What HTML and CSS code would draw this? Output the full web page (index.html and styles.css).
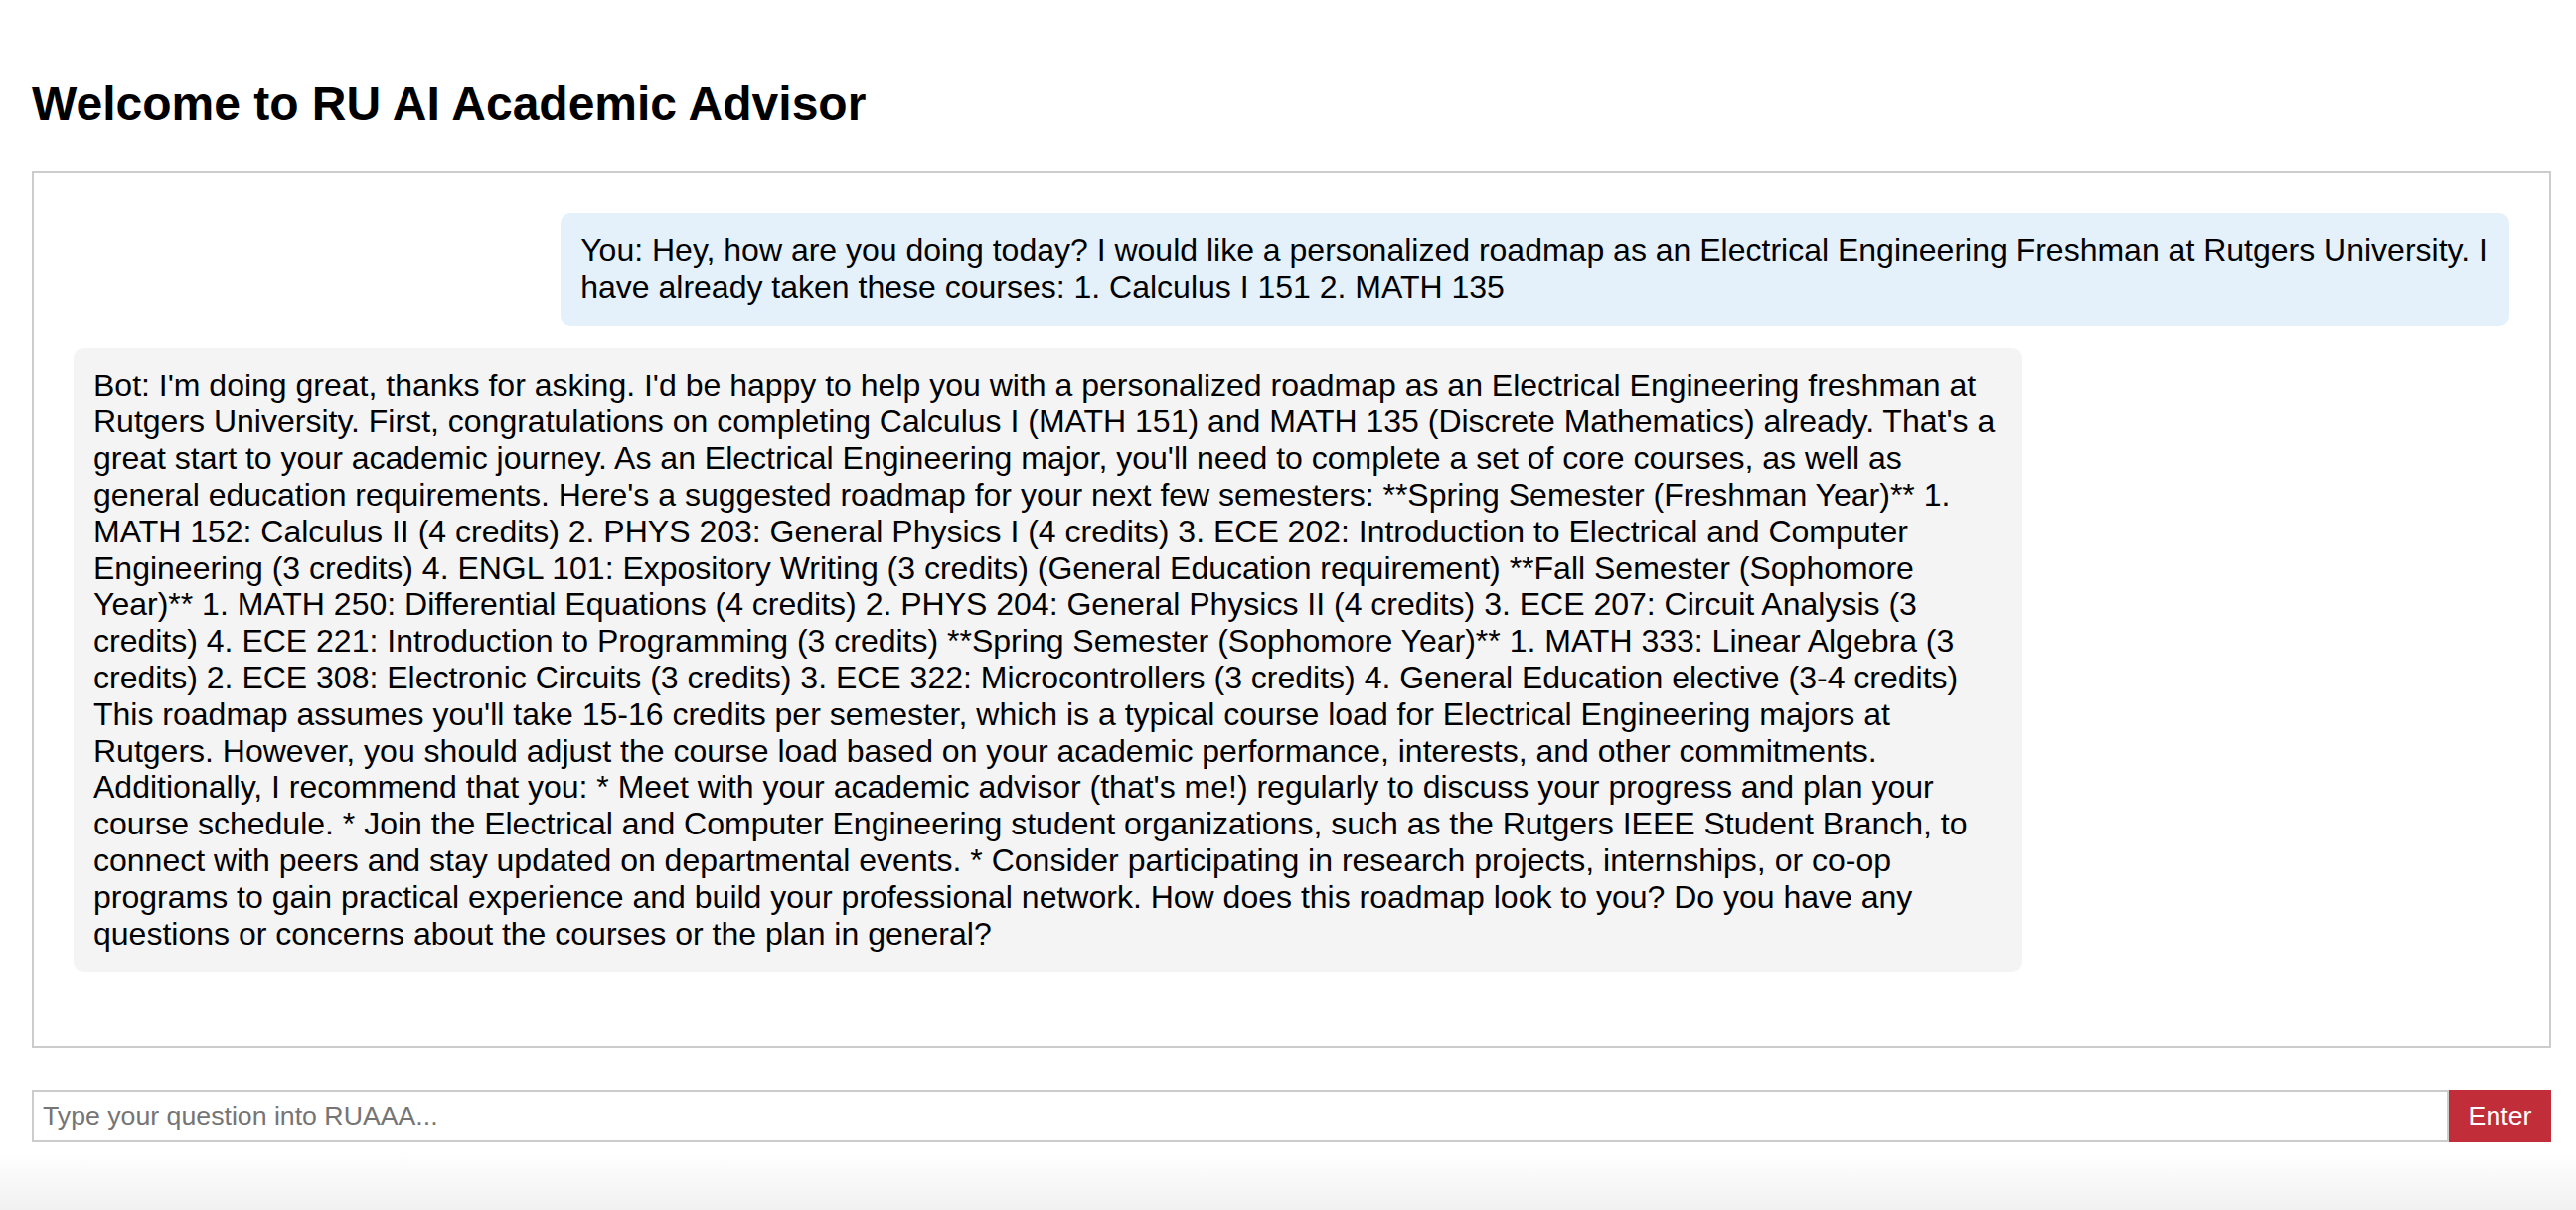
FILE: index.html
```html
<!DOCTYPE html>
<html lang="en">
<head>
<meta charset="utf-8">
<title>RU AI Academic Advisor</title>
<link rel="stylesheet" href="styles.css">
</head>
<body>
<div class="page">
  <h1 class="title">Welcome to RU AI Academic Advisor</h1>
  <div class="chat">
    <div class="msg msg-user">You: Hey, how are you doing today? I would like a personalized roadmap as an Electrical Engineering Freshman at Rutgers University. I have already taken these courses: 1. Calculus I 151 2. MATH 135</div>
    <div class="msg msg-bot">Bot: I'm doing great, thanks for asking. I'd be happy to help you with a personalized roadmap as an Electrical Engineering freshman at Rutgers University. First, congratulations on completing Calculus I (MATH 151) and MATH 135 (Discrete Mathematics) already. That's a great start to your academic journey. As an Electrical Engineering major, you'll need to complete a set of core courses, as well as general education requirements. Here's a suggested roadmap for your next few semesters: **Spring Semester (Freshman Year)** 1. MATH 152: Calculus II (4 credits) 2. PHYS 203: General Physics I (4 credits) 3. ECE 202: Introduction to Electrical and Computer Engineering (3 credits) 4. ENGL 101: Expository Writing (3 credits) (General Education requirement) **Fall Semester (Sophomore Year)** 1. MATH 250: Differential Equations (4 credits) 2. PHYS 204: General Physics II (4 credits) 3. ECE 207: Circuit Analysis (3 credits) 4. ECE 221: Introduction to Programming (3 credits) **Spring Semester (Sophomore Year)** 1. MATH 333: Linear Algebra (3 credits) 2. ECE 308: Electronic Circuits (3 credits) 3. ECE 322: Microcontrollers (3 credits) 4. General Education elective (3-4 credits) This roadmap assumes you'll take 15-16 credits per semester, which is a typical course load for Electrical Engineering majors at Rutgers. However, you should adjust the course load based on your academic performance, interests, and other commitments. Additionally, I recommend that you: * Meet with your academic advisor (that's me!) regularly to discuss your progress and plan your course schedule. * Join the Electrical and Computer Engineering student organizations, such as the Rutgers IEEE Student Branch, to connect with peers and stay updated on departmental events. * Consider participating in research projects, internships, or co-op programs to gain practical experience and build your professional network. How does this roadmap look to you? Do you have any questions or concerns about the courses or the plan in general?</div>
  </div>
  <form class="ask" onsubmit="return false;">
    <input class="ask-input" type="text" placeholder="Type your question into RUAAA...">
    <button class="ask-btn" type="submit">Enter</button>
  </form>
</div>
</body>
</html>
```

FILE: styles.css
```css
html, body {
  margin: 0;
  padding: 0;
}

body {
  min-height: 1218px;
  background: linear-gradient(to bottom, #ffffff 0, #ffffff 1160px, #f1f1f1 1218px);
  font-family: "Liberation Sans", Arial, Helvetica, sans-serif;
  color: #000;
}

.page {
  padding: 0 25px 0 32px;
}

.title {
  margin: 0;
  padding: 77px 0 40px;
  font-size: 48px;
  font-weight: bold;
  line-height: 55px;
}

.chat {
  box-sizing: border-box;
  height: 883px;
  border: 2px solid #cccccc;
  padding: 40px;
  overflow-y: auto;
  display: flex;
  flex-direction: column;
  gap: 22px;
}

.msg {
  box-sizing: border-box;
  max-width: 80%;
  padding: 20px 20px;
  border-radius: 10px;
  font-size: 32px;
  line-height: 36.8px;
}

.msg-user {
  align-self: flex-end;
  background: #e4f1fb;
}

.msg-bot {
  align-self: flex-start;
  background: #f4f4f4;
}

.ask {
  display: flex;
  margin: 42px 0 0;
  height: 53px;
}

.ask-input {
  flex: 1;
  box-sizing: border-box;
  height: 53px;
  margin: 0;
  border: 2px solid #cccccc;
  padding: 0 9px;
  font-family: "Liberation Sans", Arial, Helvetica, sans-serif;
  font-size: 26.7px;
  color: #000;
  outline: none;
}

.ask-input::placeholder {
  color: #757575;
}

.ask-btn {
  box-sizing: border-box;
  width: 103px;
  height: 53px;
  margin: 0;
  border: none;
  padding: 0;
  background: #c12d39;
  color: #ffffff;
  font-family: "Liberation Sans", Arial, Helvetica, sans-serif;
  font-size: 26.7px;
}
```
